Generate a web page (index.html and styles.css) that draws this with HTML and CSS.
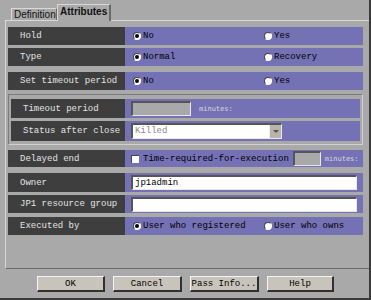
FILE: index.html
```html
<!DOCTYPE html>
<html>
<head>
<meta charset="utf-8">
<link rel="stylesheet" href="styles.css">
</head>
<body>
<div class="window">
  <div class="tabs">
    <div class="tab">Definition</div>
    <div class="tab active">Attributes</div>
  </div>
  <div class="panel">
    <div class="row r-hold">
      <div class="label">Hold</div>
      <div class="value radios">
        <span class="opt"><span class="radio on"></span>No</span>
        <span class="opt"><span class="radio"></span>Yes</span>
      </div>
    </div>
    <div class="row r-type">
      <div class="label">Type</div>
      <div class="value radios">
        <span class="opt"><span class="radio on"></span>Normal</span>
        <span class="opt"><span class="radio"></span>Recovery</span>
      </div>
    </div>
    <div class="row r-set">
      <div class="label">Set timeout period</div>
      <div class="value radios">
        <span class="opt"><span class="radio on"></span>No</span>
        <span class="opt"><span class="radio"></span>Yes</span>
      </div>
    </div>
    <div class="group">
      <div class="row g-row r-period">
        <div class="label">Timeout period</div>
        <div class="value">
          <span class="field disabled w60"></span>
          <span class="unit">minutes:</span>
        </div>
      </div>
      <div class="row g-row r-status">
        <div class="label">Status after close</div>
        <div class="value">
          <span class="select"><span class="sel-text">Killed</span><span class="sel-btn"><span class="tri"></span></span></span>
        </div>
      </div>
    </div>
    <div class="row r-delay">
      <div class="label">Delayed end</div>
      <div class="value">
        <span class="check"></span>
        <span class="txt">Time-required-for-execution</span>
        <span class="field disabled w28"></span>
        <span class="unit">minutes:</span>
      </div>
    </div>
    <div class="row r-owner">
      <div class="label">Owner</div>
      <div class="value">
        <span class="field full">jp1admin</span>
      </div>
    </div>
    <div class="row r-jp1">
      <div class="label">JP1 resource group</div>
      <div class="value">
        <span class="field full"></span>
      </div>
    </div>
    <div class="row r-exec">
      <div class="label">Executed by</div>
      <div class="value radios">
        <span class="opt"><span class="radio on"></span>User who registered</span>
        <span class="opt"><span class="radio"></span>User who owns</span>
      </div>
    </div>
  </div>
  <div class="buttons">
    <span class="btn b-ok">OK</span>
    <span class="btn b-cancel">Cancel</span>
    <span class="btn b-pass">Pass Info...</span>
    <span class="btn b-help">Help</span>
  </div>
</div>
</body>
</html>
```

FILE: styles.css
```css
html, body {
  margin: 0;
  padding: 0;
  background: #a9a9a9;
}
.window {
  width: 369px;
  height: 298px;
  background: #a9a9a9;
  border-right: 2px solid #3a3a3a;
  border-bottom: 2px solid #3a3a3a;
  overflow: hidden;
  font-family: "Liberation Mono", "DejaVu Sans Mono", monospace;
  font-size: 9px;
  color: #000;
}
.tabs {
  height: 20px;
  display: flex;
  align-items: flex-end;
  padding-left: 11px;
  box-sizing: border-box;
}
.tab {
  font-family: "Liberation Sans", Arial, sans-serif;
  font-size: 10px;
  height: 11px;
  line-height: 11px;
  padding: 0 1px 0 2px;
  width: 41px;
  border-top: 1px solid #d8d8d8;
  border-left: 1px solid #d8d8d8;
  border-right: 1px solid #6a6a6a;
  color: #111;
}
.tab.active {
  font-weight: bold;
  height: 16px;
  line-height: 14px;
  width: 48px;
  margin-bottom: -1px;
  position: relative;
  background: #a9a9a9;
  border-right: 2px solid #6a6a6a;
  z-index: 1;
}
.panel {
  margin-left: 5px;
  width: 359px;
  height: 241px;
  border-top: 1px solid #d8d8d8;
  border-left: 1px solid #d8d8d8;
  border-right: 1px solid #6a6a6a;
  border-bottom: 1px solid #6a6a6a;
  padding: 6px 2px 0 2px;
  box-sizing: content-box;
  display: flex;
  flex-direction: column;
}
.row {
  display: grid;
  grid-template-columns: 117px 1fr;
  height: 18px;
  width: 355px;
}
.label {
  background: #3e3e3e;
  color: #e4e4e4;
  padding-left: 12px;
  display: flex;
  align-items: center;
  white-space: nowrap;
}
.value {
  background: #7472b4;
  display: flex;
  align-items: center;
  padding-left: 6px;
  white-space: nowrap;
}
.radios {
  display: grid;
  grid-template-columns: 131px 1fr;
  padding-left: 8px;
}
.opt {
  display: flex;
  align-items: center;
  gap: 2px;
}
.radio {
  width: 8px;
  height: 8px;
  border-radius: 50%;
  background: #fff;
  box-sizing: border-box;
  border: 1px solid #fff;
  border-top-color: #444;
  border-left-color: #444;
  position: relative;
}
.radio.on::after {
  content: "";
  position: absolute;
  left: 1px;
  top: 1px;
  width: 4px;
  height: 4px;
  border-radius: 50%;
  background: #000;
}
.r-hold { margin-top: 0; }
.r-type { margin-top: 3px; }
.r-set { margin-top: 6px; }
.group {
  margin-top: 4px;
  width: 349px;
  border-top: 1px solid #7a7a7a;
  border-left: 1px solid #7a7a7a;
  border-right: 1px solid #d0d0d0;
  border-bottom: 1px solid #d0d0d0;
  padding: 4px 2px 3px 2px;
}
.g-row {
  width: 349px;
  grid-template-columns: 114px 1fr;
}
.r-period { height: 19px; }
.r-status { height: 20px; margin-top: 3px; }
.field {
  display: inline-block;
  box-sizing: border-box;
  height: 15px;
  background: #fff;
  border-top: 2px solid #555;
  border-left: 2px solid #555;
  border-right: 1px solid #e8e8e8;
  border-bottom: 1px solid #e8e8e8;
  line-height: 12px;
  padding-left: 2px;
  color: #000;
}
.field.disabled {
  background: #a9a9a9;
}
.w60 { width: 60px; }
.w28 { width: 28px; margin-left: 4px; }
.full { width: 226px; }
.unit {
  font-family: "DejaVu Sans Mono", monospace;
  font-size: 7px;
  color: #d8d8d8;
  margin-left: 8px;
}
.r-delay .unit { margin-left: 4px; }
.select {
  display: flex;
  box-sizing: border-box;
  width: 151px;
  height: 16px;
  background: #fff;
  border-top: 2px solid #555;
  border-left: 2px solid #555;
  border-right: 1px solid #e8e8e8;
  border-bottom: 1px solid #e8e8e8;
}
.sel-text {
  flex: 1;
  color: #8a8a8a;
  line-height: 12px;
  padding-left: 2px;
}
.sel-btn {
  width: 11px;
  background: #b8b4ac;
  border-left: 1px solid #eee;
  display: flex;
  align-items: center;
  justify-content: center;
}
.tri {
  width: 0;
  height: 0;
  border-left: 3px solid transparent;
  border-right: 3px solid transparent;
  border-top: 3px solid #555;
}
.r-delay { height: 17px; margin-top: 5px; }
.check {
  width: 8px;
  height: 8px;
  background: #fff;
  box-sizing: border-box;
  border-top: 1px solid #444;
  border-left: 1px solid #444;
  margin-right: 4px;
}
.r-owner { height: 19px; margin-top: 6px; }
.r-jp1 { height: 18px; margin-top: 3px; }
.r-exec { height: 18px; margin-top: 4px; }
.buttons {
  display: flex;
  gap: 8px;
  padding-left: 37px;
  margin-top: 7px;
}
.btn {
  box-sizing: border-box;
  height: 16px;
  background: #c8c4bc;
  border-top: 1px solid #f4f4f4;
  border-left: 1px solid #f4f4f4;
  border-right: 2px solid #303030;
  border-bottom: 2px solid #303030;
  display: flex;
  align-items: center;
  justify-content: center;
  color: #000;
}
.b-ok { width: 68px; }
.b-cancel { width: 69px; }
.b-pass { width: 69px; }
.b-help { width: 67px; }
```
